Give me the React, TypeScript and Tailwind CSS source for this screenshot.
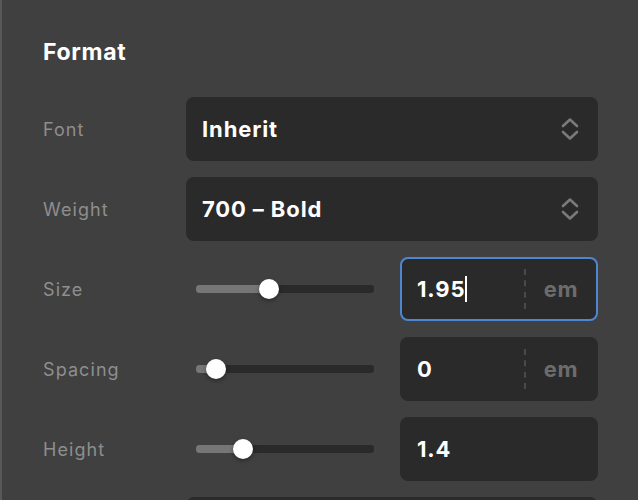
import React from 'react'

const font = { fontFamily: 'Inter, "Noto Sans", sans-serif' }

function Chevrons() {
  return (
    <svg width="18" height="24" viewBox="0 0 18 24" fill="none" className="text-[#7a7a7a]">
      <path d="M2 9 L9 2.5 L16 9" stroke="currentColor" strokeWidth="2.6" strokeLinecap="round" strokeLinejoin="round" />
      <path d="M2 15 L9 21.5 L16 15" stroke="currentColor" strokeWidth="2.6" strokeLinecap="round" strokeLinejoin="round" />
    </svg>
  )
}

function Label({ children }: { children?: React.ReactNode }) {
  return <div className="w-[143px] shrink-0 text-[18px] tracking-[0.06em] text-[#8e8e8e]">{children}</div>
}

function Select({ value }: { value?: string }) {
  return (
    <div className="flex h-16 flex-1 items-center justify-between rounded-lg bg-[#2a2a2a] pl-4 pr-[19px]">
      <span className="text-[22px] font-bold tracking-[0.04em] text-white">{value}</span>
      <Chevrons />
    </div>
  )
}

function Slider({ pos }: { pos: number }) {
  // pos = thumb centre in px from track start (track is 178px)
  return (
    <div className="flex w-[198px] shrink-0 items-center px-[10px]">
      <div className="relative h-[8px] w-full rounded-[3px] bg-[#2a2a2a]">
        <div className="absolute inset-y-0 left-0 rounded-l-[3px] bg-[#767676]" style={{ width: pos }} />
        <div
          className="absolute top-1/2 h-5 w-5 -translate-x-1/2 -translate-y-1/2 rounded-full bg-white shadow-[0_2px_4px_rgba(0,0,0,0.35)]"
          style={{ left: pos }}
        />
      </div>
    </div>
  )
}

function NumberInput({ value, unit, focused }: { value: string; unit?: string; focused?: boolean }) {
  return (
    <div
      className={`flex h-16 flex-1 items-center rounded-lg border-2 bg-[#2a2a2a] ${
        focused ? 'border-[#4f86d0]' : 'border-transparent'
      }`}
    >
      <div className="flex flex-1 items-center pl-[15px] text-[22px] font-bold tracking-[0.04em] text-white">
        {value}
        {focused && <span className="inline-block h-[26px] w-[2px] bg-white" />}
      </div>
      {unit && (
        <div className="flex h-10 w-[72px] items-center justify-center border-l-2 border-dashed border-[#4a4a4a] text-[22px] font-bold tracking-[0.03em] text-[#6c6c6c]">
          {unit}
        </div>
      )}
    </div>
  )
}

export default function App() {
  return (
    <div className="h-[500px] w-[638px] overflow-hidden border-l-2 border-[#585858] bg-[#404040]" style={font}>
      <div className="pl-[41px] pr-10 pt-[38px]">
        <h2 className="text-[23px] font-bold leading-7 tracking-[0.03em] text-white">Format</h2>
        <div className="mt-[31px] flex flex-col gap-4">
          <div className="flex items-center">
            <Label>Font</Label>
            <Select value="Inherit" />
          </div>
          <div className="flex items-center">
            <Label>Weight</Label>
            <Select value="700 – Bold" />
          </div>
          <div className="flex items-center">
            <Label>Size</Label>
            <div className="flex flex-1 gap-4">
              <Slider pos={73} />
              <NumberInput value="1.95" unit="em" focused />
            </div>
          </div>
          <div className="flex items-center">
            <Label>Spacing</Label>
            <div className="flex flex-1 gap-4">
              <Slider pos={20} />
              <NumberInput value="0" unit="em" />
            </div>
          </div>
          <div className="flex items-center">
            <Label>Height</Label>
            <div className="flex flex-1 gap-4">
              <Slider pos={47} />
              <NumberInput value="1.4" />
            </div>
          </div>
          <div className="flex items-center">
            <Label />
            <Select />
          </div>
        </div>
      </div>
    </div>
  )
}
